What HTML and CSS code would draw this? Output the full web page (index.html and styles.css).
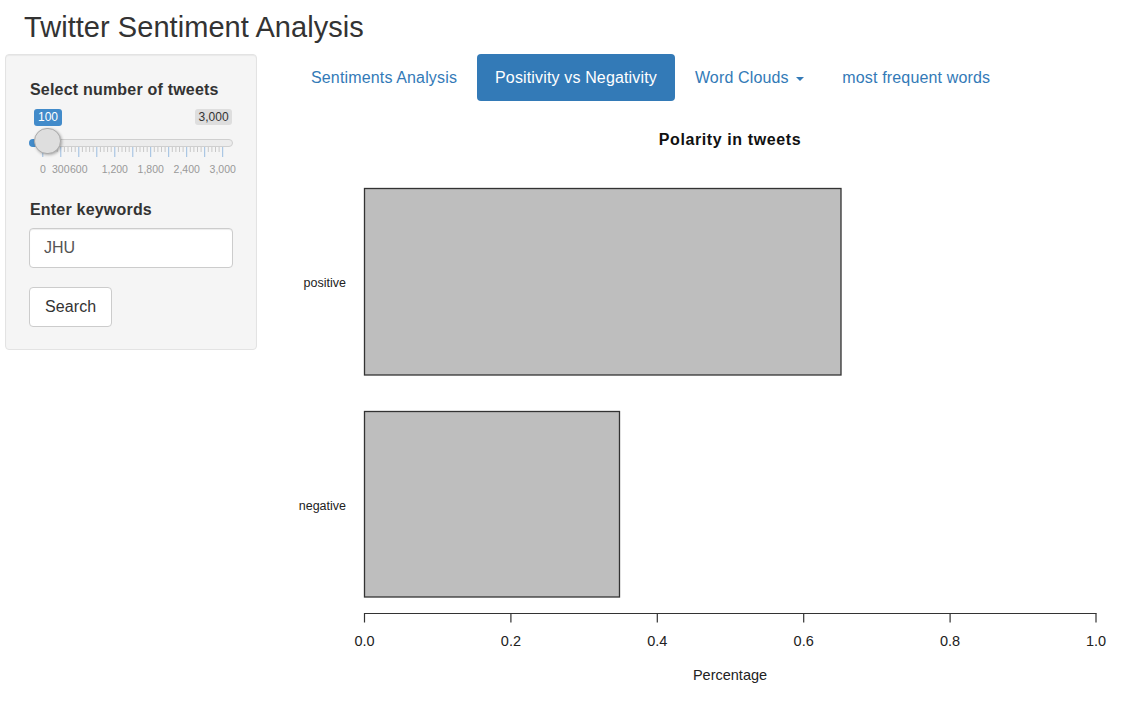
FILE: index.html
```html
<!DOCTYPE html>
<html lang="en">
<head>
<meta charset="utf-8">
<title>Twitter Sentiment Analysis</title>
<link rel="stylesheet" href="styles.css">
</head>
<body>
<div class="page">
  <h2 class="title">Twitter Sentiment Analysis</h2>
  <div class="row">
    <aside class="well">
      <label class="ctl-label">Select number of tweets</label>
      <div class="slider">
        <span class="irs-line"></span>
        <span class="irs-bar"></span>
        <span class="irs-from">100</span>
        <span class="irs-max">3,000</span>
        <svg class="irs-grid" width="210" height="30" viewBox="0 0 210 30">
          <g class="small" stroke="#c8c8c8" stroke-width="1">
            <line x1="17.4" y1="0" x2="17.4" y2="5"/><line x1="21" y1="0" x2="21" y2="5"/><line x1="24.6" y1="0" x2="24.6" y2="5"/><line x1="28.2" y1="0" x2="28.2" y2="5"/>
            <line x1="35.4" y1="0" x2="35.4" y2="5"/><line x1="39" y1="0" x2="39" y2="5"/><line x1="42.6" y1="0" x2="42.6" y2="5"/><line x1="46.2" y1="0" x2="46.2" y2="5"/>
            <line x1="53.4" y1="0" x2="53.4" y2="5"/><line x1="57" y1="0" x2="57" y2="5"/><line x1="60.6" y1="0" x2="60.6" y2="5"/><line x1="64.2" y1="0" x2="64.2" y2="5"/>
            <line x1="71.4" y1="0" x2="71.4" y2="5"/><line x1="75" y1="0" x2="75" y2="5"/><line x1="78.6" y1="0" x2="78.6" y2="5"/><line x1="82.2" y1="0" x2="82.2" y2="5"/>
            <line x1="89.4" y1="0" x2="89.4" y2="5"/><line x1="93" y1="0" x2="93" y2="5"/><line x1="96.6" y1="0" x2="96.6" y2="5"/><line x1="100.2" y1="0" x2="100.2" y2="5"/>
            <line x1="107.4" y1="0" x2="107.4" y2="5"/><line x1="111" y1="0" x2="111" y2="5"/><line x1="114.6" y1="0" x2="114.6" y2="5"/><line x1="118.2" y1="0" x2="118.2" y2="5"/>
            <line x1="125.3" y1="0" x2="125.3" y2="5"/><line x1="128.9" y1="0" x2="128.9" y2="5"/><line x1="132.5" y1="0" x2="132.5" y2="5"/><line x1="136.1" y1="0" x2="136.1" y2="5"/>
            <line x1="143.3" y1="0" x2="143.3" y2="5"/><line x1="146.9" y1="0" x2="146.9" y2="5"/><line x1="150.5" y1="0" x2="150.5" y2="5"/><line x1="154.1" y1="0" x2="154.1" y2="5"/>
            <line x1="161.3" y1="0" x2="161.3" y2="5"/><line x1="164.9" y1="0" x2="164.9" y2="5"/><line x1="168.5" y1="0" x2="168.5" y2="5"/><line x1="172.1" y1="0" x2="172.1" y2="5"/>
            <line x1="179.3" y1="0" x2="179.3" y2="5"/><line x1="182.9" y1="0" x2="182.9" y2="5"/><line x1="186.5" y1="0" x2="186.5" y2="5"/><line x1="190.1" y1="0" x2="190.1" y2="5"/>
          </g>
          <g class="big" stroke="#9bbde0" stroke-width="1">
            <line x1="13.8" y1="0" x2="13.8" y2="10"/>
            <line x1="31.8" y1="0" x2="31.8" y2="10"/>
            <line x1="49.8" y1="0" x2="49.8" y2="10"/>
            <line x1="67.8" y1="0" x2="67.8" y2="10"/>
            <line x1="85.8" y1="0" x2="85.8" y2="10"/>
            <line x1="103.8" y1="0" x2="103.8" y2="10"/>
            <line x1="121.7" y1="0" x2="121.7" y2="10"/>
            <line x1="139.7" y1="0" x2="139.7" y2="10"/>
            <line x1="157.7" y1="0" x2="157.7" y2="10"/>
            <line x1="175.7" y1="0" x2="175.7" y2="10"/>
            <line x1="193.7" y1="0" x2="193.7" y2="10"/>
          </g>
          <g class="grid-text" text-anchor="middle">
            <text x="13.8" y="26">0</text>
            <text x="31.8" y="26">300</text>
            <text x="49.8" y="26">600</text>
            <text x="85.8" y="26">1,200</text>
            <text x="121.7" y="26">1,800</text>
            <text x="157.7" y="26">2,400</text>
            <text x="193.7" y="26">3,000</text>
          </g>
        </svg>
        <span class="irs-handle"></span>
      </div>
      <label class="ctl-label">Enter keywords</label>
      <input class="text-input" type="text" value="JHU">
      <button class="btn" type="button">Search</button>
    </aside>
    <main class="main">
      <ul class="nav">
        <li><a href="#">Sentiments Analysis</a></li>
        <li class="active"><a href="#">Positivity vs Negativity</a></li>
        <li><a href="#">Word Clouds <span class="caret"></span></a></li>
        <li><a href="#">most frequent words</a></li>
      </ul>
      <svg class="plot" width="835" height="600" viewBox="293 101 835 600">
        <text class="plot-title" x="730" y="145" text-anchor="middle">Polarity in tweets</text>
        <rect x="364.5" y="188.5" width="476.5" height="186.5" fill="#bebebe" stroke="#333" stroke-width="1.3"/>
        <rect x="364.5" y="411.5" width="255" height="185.5" fill="#bebebe" stroke="#333" stroke-width="1.3"/>
        <text class="ylab" x="346" y="287" text-anchor="end">positive</text>
        <text class="ylab" x="346" y="510" text-anchor="end">negative</text>
        <g stroke="#333" stroke-width="1.2">
          <line x1="364" y1="613.5" x2="1096.3" y2="613.5"/>
          <line x1="364.5" y1="613" x2="364.5" y2="622.5"/>
          <line x1="510.9" y1="613" x2="510.9" y2="622.5"/>
          <line x1="657.3" y1="613" x2="657.3" y2="622.5"/>
          <line x1="803.7" y1="613" x2="803.7" y2="622.5"/>
          <line x1="950.1" y1="613" x2="950.1" y2="622.5"/>
          <line x1="1096" y1="613" x2="1096" y2="622.5"/>
        </g>
        <g class="xtick" text-anchor="middle">
          <text x="364.5" y="646">0.0</text>
          <text x="510.9" y="646">0.2</text>
          <text x="657.3" y="646">0.4</text>
          <text x="803.7" y="646">0.6</text>
          <text x="950.1" y="646">0.8</text>
          <text x="1096" y="646">1.0</text>
        </g>
        <text class="xlab" x="730" y="680" text-anchor="middle">Percentage</text>
      </svg>
    </main>
  </div>
</div>
</body>
</html>
```

FILE: styles.css
```css
* { box-sizing: border-box; }

html, body {
  margin: 0;
  padding: 0;
  background: #fff;
}

body {
  font-family: "Liberation Sans", Arial, Helvetica, sans-serif;
  color: #333;
  overflow: hidden;
}

.page {
  width: 1128px;
}

.title {
  margin: 0;
  padding: 11px 0 0 24px;
  font-size: 29px;
  line-height: 33px;
  font-weight: 400;
  letter-spacing: 0.05px;
  color: #333;
}

.row {
  display: flex;
  align-items: flex-start;
  margin-top: 10px;
}

/* Sidebar well */
.well {
  margin-left: 5px;
  width: 252px;
  flex: none;
  padding: 23px 23px 22px;
  background: #f5f5f5;
  border: 1px solid #e3e3e3;
  border-radius: 4px;
  box-shadow: inset 0 1px 1px rgba(0, 0, 0, 0.05);
  display: flex;
  flex-direction: column;
}

.ctl-label {
  display: block;
  padding-left: 1px;
  font-size: 16px;
  line-height: 23px;
  font-weight: 700;
  letter-spacing: 0.2px;
  color: #333;
}

/* Range slider */
.slider {
  position: relative;
  height: 80px;
  margin-bottom: 17px;
}

.irs-line {
  position: absolute;
  left: 1px;
  top: 37.5px;
  width: 202.5px;
  height: 8.5px;
  background: #ececec;
  border: 1px solid #cfcfcf;
  border-radius: 5px;
}

.irs-bar {
  position: absolute;
  left: -0.5px;
  top: 37.5px;
  width: 19px;
  height: 8.5px;
  background: #428bca;
  border-radius: 5px 0 0 5px;
}

.irs-from,
.irs-max {
  position: absolute;
  font-size: 12px;
  border-radius: 3px;
  white-space: nowrap;
}

.irs-from {
  left: 5.3px;
  top: 7.5px;
  height: 17px;
  line-height: 17px;
  padding: 0 3.7px;
  background: #428bca;
  color: #fff;
}

.irs-max {
  right: 0.7px;
  top: 8px;
  height: 16px;
  line-height: 16px;
  padding: 0 3.7px;
  background: #dedede;
  color: #333;
}

.irs-grid {
  position: absolute;
  left: 0;
  top: 46px;
  overflow: visible;
}

.grid-text {
  font-family: "Liberation Sans", Arial, sans-serif;
  font-size: 10.5px;
  fill: #999;
}

.irs-handle {
  position: absolute;
  left: 5.2px;
  top: 26.8px;
  width: 26.5px;
  height: 26.5px;
  border-radius: 50%;
  background: #dedede;
  border: 1px solid #ababab;
  box-shadow: 1px 1px 3px rgba(0, 0, 0, 0.3);
}

/* Inputs */
.text-input {
  display: block;
  width: 100%;
  height: 40px;
  margin: 7px 0 19px;
  padding: 0 14px;
  font-family: inherit;
  font-size: 16px;
  color: #555;
  background: #fff;
  border: 1px solid #ccc;
  border-radius: 4px;
  box-shadow: inset 0 1px 1px rgba(0, 0, 0, 0.075);
  outline: none;
}

.btn {
  display: block;
  align-self: flex-start;
  height: 40px;
  padding: 0 15px;
  font-family: inherit;
  font-size: 16px;
  letter-spacing: 0.1px;
  color: #333;
  background: #fff;
  border: 1px solid #ccc;
  border-radius: 4px;
}

/* Main panel */
.main {
  margin-left: 36px;
  flex: 1;
  min-width: 0;
}

.nav {
  display: flex;
  margin: 0;
  padding: 0;
  list-style: none;
}

.nav li + li {
  margin-left: 2px;
}

.nav a {
  display: block;
  padding: 12px 18px;
  font-size: 16px;
  line-height: 23px;
  letter-spacing: 0.15px;
  color: #337ab7;
  text-decoration: none;
  border-radius: 4px;
}

.nav .active a {
  background: #337ab7;
  color: #fff;
}

.caret {
  display: inline-block;
  width: 0;
  height: 0;
  margin-left: 3px;
  vertical-align: middle;
  border-top: 4.6px solid;
  border-left: 4.6px solid transparent;
  border-right: 4.6px solid transparent;
}

/* Plot */
.plot {
  display: block;
  font-family: "Liberation Sans", Arial, sans-serif;
}

.plot-title {
  font-size: 16px;
  font-weight: 700;
  letter-spacing: 0.6px;
  fill: #111;
}

.ylab {
  font-size: 12.5px;
  fill: #222;
}

.xtick,
.xlab {
  font-size: 14.5px;
  fill: #222;
}
```
